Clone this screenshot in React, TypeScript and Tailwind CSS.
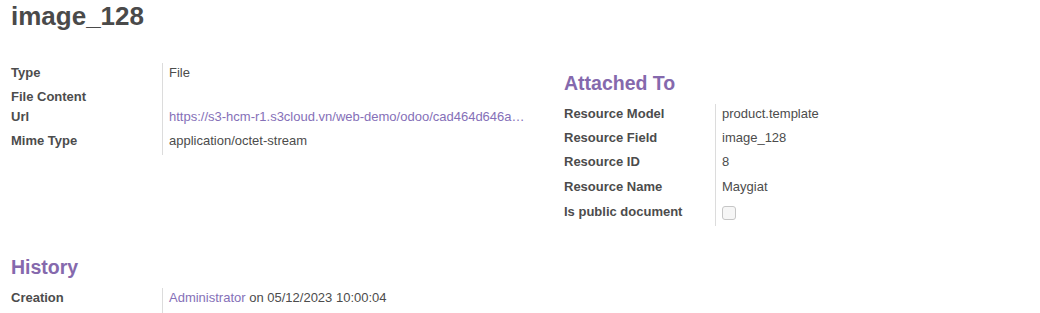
import React from 'react';

interface Field {
  label: string;
  value?: React.ReactNode;
  h: string;
}

const font = { fontFamily: '"Liberation Sans", Arial, sans-serif' };

function Row({ label, value, h }: Field) {
  return (
    <div className={`flex ${h}`}>
      <div className="w-[151px] shrink-0 font-bold text-[#4c4c4c] leading-[19.5px]">{label}</div>
      <div className="flex-1 min-w-0 border-l border-[#dcdcdc] pl-[6px] leading-[19.5px] truncate">{value}</div>
    </div>
  );
}

function Heading({ children }: { children: React.ReactNode }) {
  return <h2 className="text-[19.5px] leading-[24px] font-bold text-[#8569ad]">{children}</h2>;
}

export default function App() {
  const left: Field[] = [
    { label: 'Type', value: 'File', h: 'h-[24px]' },
    { label: 'File Content', value: '', h: 'h-[20px]' },
    {
      label: 'Url',
      value: (
        <span className="text-[#8570b8]">
          https://s3-hcm-r1.s3cloud.vn/web-demo/odoo/cad464d646a…
        </span>
      ),
      h: 'h-[24px]',
    },
    { label: 'Mime Type', value: 'application/octet-stream', h: 'h-[24px]' },
  ];

  const right: Field[] = [
    { label: 'Resource Model', value: 'product.template', h: 'h-[24px]' },
    { label: 'Resource Field', value: 'image_128', h: 'h-[24px]' },
    { label: 'Resource ID', value: '8', h: 'h-[25px]' },
    { label: 'Resource Name', value: 'Maygiat', h: 'h-[25px]' },
    {
      label: 'Is public document',
      value: (
        <span className="mt-[4px] block w-[14px] h-[14px] rounded-[3px] border border-[#c6c6c6] bg-[#f6f6f6]" />
      ),
      h: 'h-[24px]',
    },
  ];

  return (
    <div className="w-[1040px] h-[313px] overflow-hidden bg-white text-[13px] text-[#4c4c4c]" style={font}>
      <div className="pl-[11px] pt-[2px]">
        <h1 className="text-[26px] leading-[29px] font-bold text-[#4a4a4a]">image_128</h1>
      </div>

      <div className="flex mt-[32px] pl-[11px]">
        <div className="w-[519px]">
          {left.map((f) => (
            <Row key={f.label} {...f} />
          ))}
        </div>
        <div className="ml-[34px] w-[465px]">
          <div className="pt-[8px] pb-[9px]">
            <Heading>Attached To</Heading>
          </div>
          {right.map((f) => (
            <Row key={f.label} {...f} />
          ))}
        </div>
      </div>

      <div className="mt-[29px] pl-[11px]">
        <div className="pb-[9px]">
          <Heading>History</Heading>
        </div>
        <div className="w-[519px]">
          <Row
            label="Creation"
            h="h-[25px]"
            value={
              <>
                <span className="text-[#8570b8]">Administrator</span> on 05/12/2023 10:00:04
              </>
            }
          />
        </div>
      </div>
    </div>
  );
}
